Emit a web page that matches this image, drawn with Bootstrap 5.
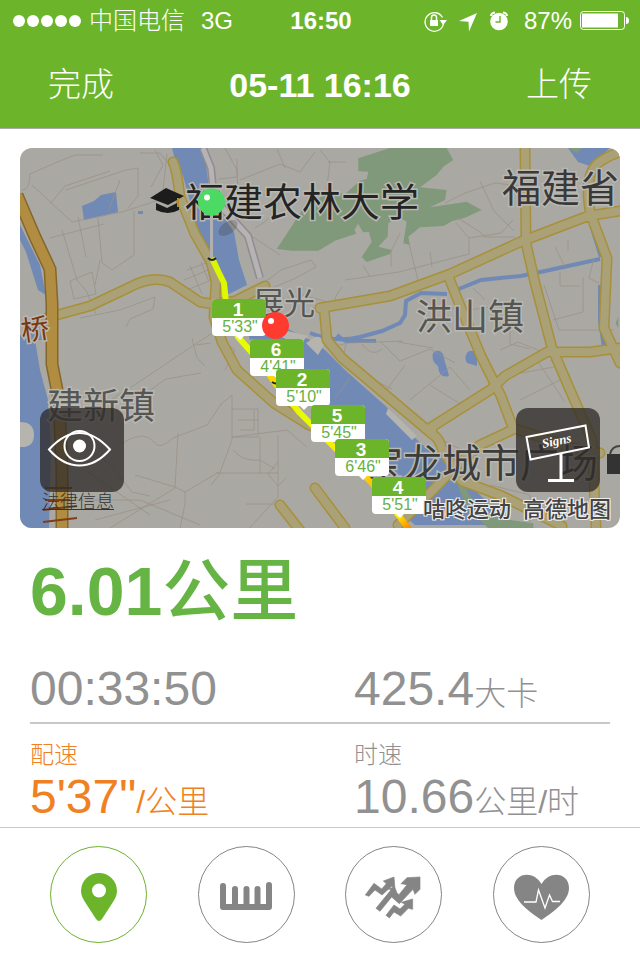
<!DOCTYPE html>
<html lang="zh-CN">
<head>
<meta charset="utf-8">
<meta name="viewport" content="width=device-width, initial-scale=1">
<title>咕咚运动</title>
<link href="https://cdn.jsdelivr.net/npm/bootstrap@5.3.0/dist/css/bootstrap.min.css" rel="stylesheet">
<style>
body{font-family:"Liberation Sans","Noto Sans CJK SC",sans-serif;color:#919191;background:#fff}
.app{min-height:100vh}
.top-area{background:#6cb52a;color:#fff;border-bottom:1px solid #a9aaa5}
.status{height:41px;padding:0 11px 0 13px;font-size:24px;font-weight:300;line-height:40px}
.side{flex:1 1 0}
.dots{gap:2px}
.dot{width:12px;height:12px;border-radius:50%;background:#fff}
.titlebar{height:87px;padding:0 48px}
.titlebar h1{font-size:34px;line-height:40px}
.titlebar .btn{font-size:33px;line-height:40px;font-weight:300;color:#fff}
.map-wrap{margin:19px 20px 0;border-radius:12px;aspect-ratio:600/380}
.map-btn{width:84px;height:84px;bottom:36px;border-radius:12px;background:rgba(46,42,40,.76)}
.map-btn svg{width:84px;height:84px}
.at-left{left:20px}.at-right{right:20px}
.legal{left:22px;bottom:16px;font-size:18px;line-height:20px;font-weight:300;color:#333}
.legal:hover{color:#000}
.credit{right:9px;bottom:4px;font-size:22px;line-height:28px;color:#444;font-weight:500;text-shadow:1px 1px #eee,-1px -1px #eee,1px -1px #eee,-1px 1px #eee}
.stats{padding:23px 30px 0}
.distance{font-size:68px;line-height:80px;color:#66b544;font-weight:700}
.distance span{font-weight:500}
.num{font-size:48px;line-height:56px}
.num span{font-size:32px;font-weight:300}
.time-row{padding:30px 0 0;border-bottom:2px solid #c7c7cc}
.second{padding-left:34px}
.cap{font-size:24px;line-height:34px;font-weight:300;margin-top:14px}
.speed .num{line-height:49px}
.pace{color:#f08122}
.tabs{border-top:1px solid #c8c8c8;padding:18px 50px}
.ring{width:97px;height:97px;border:1px solid #858585;border-radius:50%;color:#858585}
.ring.on{border-color:#6cb52a;color:#6cb52a}
.ring svg{width:95px;height:95px}
svg text{font-family:"Liberation Sans","Noto Sans CJK SC",sans-serif}
.place{fill:#4a4a48;stroke:#b9b8b3;stroke-width:3;paint-order:stroke}
.tag-no{font-weight:700;font-size:19px;fill:#fff;text-anchor:middle}
.tag-time{font-size:16px;fill:#67b043;text-anchor:middle}
</style>
<script src="https://cdn.jsdelivr.net/npm/bootstrap@5.3.0/dist/js/bootstrap.bundle.min.js"></script>
</head>
<body>
<div class="app d-flex flex-column">
<header class="top-area">
  <div class="status d-flex align-items-center">
    <div class="side d-flex align-items-center">
      <div class="dots d-flex me-2"><i class="dot"></i><i class="dot"></i><i class="dot"></i><i class="dot"></i><i class="dot"></i></div>
      <span>中国电信</span><span class="ms-3">3G</span>
    </div>
    <strong class="fw-bold">16:50</strong>
    <div class="side d-flex align-items-center justify-content-end gap-2">
      <svg width="84" height="24" viewBox="425 8 84 24" aria-hidden="true">
        <g transform="translate(-10 0)"><path d="M454.500 22.500a9.300 9.300 0 1 1-1-6" fill="none" stroke="#fff" stroke-width="1.300"/><path d="M450.500 19h7.500l-3.800 5z" fill="#fff"/><path d="M441 19h8v6h-8z" fill="#fff"/><path d="M442.500 19v-2.500a2.500 2.500 0 0 1 5 0V19" fill="none" stroke="#fff" stroke-width="1.500"/></g>
        <path d="M478 12 460 20l9.500.8.500 9.700z" fill="#fff"/>
        <circle cx="500" cy="20.500" r="8.800" fill="#fff"/><path d="M501 15v6h-4.500" fill="none" stroke="#6cb52a" stroke-width="1.400"/><path d="M492 15q0-3 4-3.500M508 15q0-3-4-3.500" fill="none" stroke="#fff" stroke-width="2"/>
      </svg>
      <span class="ms-2">87%</span>
      <svg width="49" height="20" viewBox="0 0 49 20" aria-label="电量"><rect x=".500" y=".500" width="44" height="18" rx="3" fill="none" stroke="#fff"/><path d="M2 2.500h36v14H2zM46 6q3 0 3 3.500T46 13z" fill="#fff"/></svg>
    </div>
  </div>
  <div class="titlebar d-flex align-items-center justify-content-between">
    <button class="btn border-0 p-0">完成</button>
    <h1 class="m-0 fw-bold">05-11 16:16</h1>
    <button class="btn border-0 p-0">上传</button>
  </div>
</header>

<main class="flex-grow-1">
<section class="map-wrap position-relative overflow-hidden" aria-label="路线地图">
<svg class="d-block w-100 h-100" viewBox="20 148 600 380" preserveAspectRatio="xMidYMid slice">
<defs>
  <linearGradient id="run" gradientUnits="userSpaceOnUse" x1="211" y1="258" x2="408" y2="528"><stop offset="0" stop-color="#d8f500"/><stop offset=".3" stop-color="#eaff00"/><stop offset=".4" stop-color="#ffd500"/><stop offset=".55" stop-color="#e6ff00"/><stop offset=".75" stop-color="#ffe600"/><stop offset=".88" stop-color="#ffae00"/><stop offset=".95" stop-color="#ffef00"/><stop offset="1" stop-color="#ff8c00"/></linearGradient>
</defs>
<path fill="#a9a8a3" d="M20 148h600v380H20z"/>
<g fill="#718ab5">
  <path d="M172 148h32l3 25 4 27 14 19 9 13 5 28 8 25-20 10-9-20-10-25-10-20-6-22-9-32-9-20z"/>
  <path d="M240 308l20 2 20 15 30 15 15 10 20 20 45 40 30 33 25 17 22 22 28 28 18 15h-98l-40-35-30-35-35-50-30-45-30-20z"/>
  <path d="M20 335l15 5 5 30 8 30 3 50-2 78H20z"/><path d="M20 225l20 40 6 30-8-5-12-38-6-12zM25 325l12-8 5 23H22z"/>
  <path d="M82 206l12-5 7-6 15-3 2 20-34 8zM568 148h42l-20 18-12-4zM433 353q6-5 10 1l2 8 3 10 1 4q-10 3-11-10-7-5-5-13zM469 351h8v15l-10-3q-4-7 2-12zM138 211h5v3h-5z"/>
</g>
<g fill="none" stroke="#718ab5" stroke-width="4"><path d="M310 333q25 10 50 4l22-6 18-8 5-8 1-14 15-8 26 1M454 291l27-11 40-4 24-5 55-12M591 225l10 32M600 285v35l4 28M337 335q6 6 11 6h28M605 336v18"/></g>
<g transform="translate(320 140) scale(.3333)" fill="#81997b">
  <path d="M115 55l95-31h170l20 36-30 20-20 25-50 37 80 8-5 30-45 22 110-17 45 25-50 23-38 10-27 15-70 4-35 28 5 25-20-5 10-65-25-15-30 20-2 40-28 30 40 10-5 12-70 24-15-15 30-45-8-30-18 1-15-26-10 18 4 12-63 21-50 30-80 0-45-5 30-45 45-70 50-35 35-25 45 10 45-40 20-5 5-22-30-2z"/>
  <path d="M745 24h40l-15 15zM895 530v35l-8-15z"/><path d="M400 1005l30 25 18 35 52 55 70 20 70 10v30H520l-80-80z"/>
</g>
<path fill="#b5b4af" d="M388 408l-2 6 26 26 5-4zM284 330l24 6-8 8-22-8zM20 422q14 0 14 13t-14 12zM308 342q13-12 16 3l-6 10-12-12z"/>
<!-- lanes -->
<g fill="none" stroke="#9b9085" stroke-opacity=".75" stroke-width="1">
  <path d="M22 190q8 0 8-16l25-11 20-8h28M32 185l40 37 50-10 40-13 5-45M66 190l60-20 12-2v28l-10 12M50 204l15-18 45-15M62 230l15 50 10 12 9 22M50 238l54-14M78 217l8 40M98 218l4 45 10 7 22-15v-44M100 260l-5 25M70 281l22-9 4 22-22 5zM140 153h20l8 10M155 150l8 15-12 22M120 180l-12 32M80 318l40-8 35-13-2 12-23 10-4 8M187 270l22-8M184 280l24-10M187 290l22-9M190 266l12 28M201 262l8 20"/>
  <path d="M98 408l44-28 40-27 38-25M142 396l24-17 35-6M124 442q20-12 30 0 5 9 19-4l34-13 15-22M192 338l5 20 8 8M196 345l15-2M213 333l22 17-10 20M220 405l12-10v45l-13 35-8 10M232 409h26v28h-26M238 420h20M240 430h14v-20M232 437l55-7 20 17M233 450q10 12 27 10l15 9M216 473h62M278 435v62l-46 50M278 462l-10 12 10 12 8-8M246 504h34M260 437v36M135 475l40 12 10 5 34-20M90 450l20 14 22 28 18 4M60 500h80l60 25M85 470l65 45M95 520l75-20M110 528l65-40 3-55M185 492v12l-5 24"/>
  <path d="M225 148l12 22 1 25M237 159v18l-18 2M240 180l40-16 20 8 15-20M245 187l20 8M255 228q20-10 25-30M250 235l30 20M320 150l10 12-4 32M328 162h18M256 289l25-19 30-10 5 7-22 12-35 14M278 300l25-5 35 10M285 168l-8-19M312 190l-7 25M342 287q-10 12-6 18M345 280l54-8 70-18v-16l-13-15M363 265l7 12M391 267v-16l9-18M408 240l10 40M430 252l2 15M458 218l22 14 5 5h30M480 181l14 30 20 20M445 203l20-10 30-10 25 3M469 238l32-5 12-13"/>
  <path d="M328 348l20-5 55-2M346 344l-4 20 50 25M362 344q10 14 20 5M380 341l20 20 30-12 25 14M405 365l-22 30M410 400l40-33 20 23M430 385l40 25M398 342l35 6M440 303l20 8 40-5 10 10v28l20 5M544 285l15 45h55M555 247l10 20M568 240v11M594 258l-5 20 10 5M560 272v14h20M500 350l18-8 30 12M553 320l30-8v-35M432 435l40 20 45-5M445 460l30 25M520 400l50-25-20-15M538 362l27 40M510 375l55-10M350 378l-15 20M485 300l-12-12M490 485l40 10v33M468 460l15-20"/>
</g>
<!-- main roads: casing, then fill -->
<defs>
  <g id="roads"><path d="M173 162q4 8 7 35l15 37 16 28 5 20-2 35 8 25 15 28 37 33 35 22 20 8"/><path d="M46 318l44-12 40-19q22-12 40-5l30 20 13 2 22-3 30-15"/><path d="M525 148l1 95 9 40 17 65 18 42 22 50 4 88M320 308l70-12 60-22 70-32 68-26 32-5M320 308h4l3 32 15 18 45 38 45 38q8 5 10 15l20 32 40 15 60 30M449 278l12 30 20 48 20 40 12 32 60 20 27 5M432 430l-2-2 60-38 15-14 42-24h43l30-4M591 216q-8-38 6-52 10-8 23-12M592 218l15 40-3 70 16 35M512 430l-32 15-25 22-22 23-35 35M280 505l22 28M315 488l30 40"/></g>
</defs>
<use href="#roads" fill="none" stroke="#a8903a" stroke-width="11" stroke-linejoin="round" stroke-linecap="round"/>
<use href="#roads" fill="none" stroke="#aaa276" stroke-width="8" stroke-linejoin="round" stroke-linecap="round"/>
<path d="M17 195l18 42 15 32 2 35v60l7 36 3 70v65" fill="none" stroke="#85672d" stroke-width="13"/>
<path d="M17 195l18 42 15 32 2 35v60l7 36 3 70v65" fill="none" stroke="#b08d40" stroke-width="10"/>
<path d="M203 148l8 20 3 30 14 16 20 22 12 42" fill="none" stroke="#918b91" stroke-width="8"/><path d="M203 148l8 20 3 30 14 16 20 22 12 42" fill="none" stroke="#b5b3b4" stroke-width="5"/>
<path d="M45 488h27M43 510l34-4M43 522l34-4M45 500h25" stroke="#803d16" stroke-width="2"/>
<!-- place names -->
<g font-weight="400">
  <text class="place" x="185" y="216" font-size="39" style="fill:#242424">福建农林大学</text>
  <text class="place" x="502" y="202" font-size="39" style="fill:#393939">福建省</text>
  <text class="place" x="416" y="330" font-size="36" style="fill:#555552">洪山镇</text>
  <text class="place" x="253" y="314" font-size="31" style="fill:#555552">展光</text>
  <text class="place" x="47" y="419" font-size="36" style="fill:#555552">建新镇</text>
  <text class="place" x="364" y="477" font-size="39" style="fill:#3c3c3a">宝龙城市广场</text>
  <text class="place" x="21" y="340" font-size="28" transform="rotate(-8 30 330)" style="fill:#7a3710">桥</text>
</g>
<path d="M150 198l16-10 18 8-16 9zM156 203l11 5 12-6v8q-11 6-23 0z" fill="#1c1c1c"/><path d="M178 198v9" stroke="#b18e28" stroke-width="2"/><path d="M607 454h13v20h-13z" fill="#333"/><path d="M610 454q2-8 10-8" fill="none" stroke="#444" stroke-width="2"/>
<!-- run -->
<ellipse cx="228" cy="228" rx="11" ry="6" fill="#333" opacity=".25" transform="rotate(-35 228 228)"/>
<path d="M212 258l7 15 5 10 2 20 12 34 25 28 12 18 25 30 35 35 30 28 22 24 24 32" fill="none" stroke="url(#run)" stroke-width="6" stroke-linejoin="round"/>
<path d="M208 258q4 4 8 0M272 382q4 3 7 0" fill="none" stroke="#222" stroke-width="2"/>
<path d="M211.500 212v46" stroke="#b0b0b3" stroke-width="3"/><circle cx="211.500" cy="202" r="13.500" fill="#4cd964"/><circle cx="207" cy="197.500" r="3" fill="#fff"/>
<defs><g id="tag"><path d="M4 0h46q4 0 4 4v29q0 4-4 4H32l-4 4-4-4H4q-4 0-4-4V4q0-4 4-4z" fill="#fff"/><path d="M4 0h46q4 0 4 4v15H0V4q0-4 4-4z" fill="#6cb52a"/></g></defs>
<g transform="translate(212 299)"><use href="#tag"/><text class="tag-no" x="26" y="17">1</text><text class="tag-time" x="28" y="33">5'33"</text></g>
<circle cx="275.500" cy="325.500" r="13.500" fill="#ff3b30"/><circle cx="271" cy="321" r="3" fill="#fff"/>
<g transform="translate(250 339)"><use href="#tag"/><text class="tag-no" x="26" y="17">6</text><text class="tag-time" x="28" y="33">4'41"</text></g>
<g transform="translate(276 369)"><use href="#tag"/><text class="tag-no" x="26" y="17">2</text><text class="tag-time" x="28" y="33">5'10"</text></g>
<g transform="translate(311 405)"><use href="#tag"/><text class="tag-no" x="26" y="17">5</text><text class="tag-time" x="28" y="33">5'45"</text></g>
<g transform="translate(335 439)"><use href="#tag"/><text class="tag-no" x="26" y="17">3</text><text class="tag-time" x="28" y="33">6'46"</text></g>
<g transform="translate(372 477)"><use href="#tag"/><text class="tag-no" x="26" y="17">4</text><text class="tag-time" x="28" y="33">5'51"</text></g>
</svg>
<button class="map-btn at-left position-absolute border-0 p-0" aria-label="显示路线">
<svg viewBox="0 0 84 84" fill="none" stroke="#fff" stroke-width="2"><path d="M9 41.500Q24 25 39.500 25T70 41.500Q56 57.500 39.500 57.500T9 41.500z"/><circle cx="39.500" cy="38" r="15"/><circle cx="39.500" cy="38" r="6.500" fill="#fff" stroke="none"/></svg></button>
<button class="map-btn at-right position-absolute border-0 p-0" aria-label="里程牌">
<svg viewBox="0 0 84 84" fill="none" stroke="#fff"><path d="M10.500 29 69.500 17.500 73 39.500 14.500 51.500z" stroke-width="2"/><path d="M45 46v26M32 72.500h26" stroke-width="3"/><text x="27" y="40" transform="rotate(-12 27 40)" font-size="13" font-style="italic" font-weight="700" fill="#fff" stroke="none" style="font-family:'Liberation Serif',serif">Signs</text></svg></button>
<a href="#" class="legal position-absolute">法律信息</a>
<div class="credit position-absolute d-flex"><span class="me-2 pe-1">咕咚运动</span><span>高德地图</span></div>
</section>

<section class="stats">
  <div class="distance">6.01<span>公里</span></div>
  <div class="time-row row g-0"><div class="num col-6">00:33:50</div><div class="num col-6 second">425.4<span>大卡</span></div></div>
  <div class="speed row g-0">
    <div class="col-6 pace"><div class="cap">配速</div><div class="num">5'37"<span>/公里</span></div></div>
    <div class="col-6 second"><div class="cap">时速</div><div class="num">10.66<span>公里/时</span></div></div>
  </div>
</section>
</main>

<nav class="tabs d-flex justify-content-between">
  <button class="ring on bg-transparent p-0" aria-label="地图"><svg viewBox="0 0 95 95"><path fill="currentColor" fill-rule="evenodd" d="M48 26a18 18 0 0 1 18 18c0 4-2 8-4 11L51 72q-3 4-6 0L34 55c-2-3-4-7-4-11a18 18 0 0 1 18-18zm0 10.500a7 7 0 1 0 0 14 7 7 0 0 0 0-14z"/></svg></button>
  <button class="ring bg-transparent p-0" aria-label="里程"><svg viewBox="0 0 95 95"><path d="M24 39v21h46V38M36 58V42M47.500 58V42M58.500 58V42" fill="none" stroke="currentColor" stroke-width="6" stroke-linecap="round" stroke-linejoin="round"/></svg></button>
  <button class="ring bg-transparent p-0" aria-label="图表"><svg viewBox="0 0 95 95"><g transform="translate(14 14) scale(.3333)" fill="currentColor" stroke="currentColor" stroke-width="2" stroke-linejoin="round"><path d="M16 102 42 67l23 17 14-16-9-8 32-12 3 36-10-8-29 26-21-15-18 19z"/><path d="M48 142 97 82l20 19 24-30-18-3 18-18 39-2v37l-15 15-6-15-41 43-23-20-35 43z"/><path d="M78 163 102 132l18 12 15-14-11-6 34-10v31l-13-3-23 23-20-12-14 18z"/><path d="M85 84l18-6 7 14-12-4z"/></g></svg></button>
  <button class="ring bg-transparent p-0" aria-label="心率"><svg viewBox="0 0 95 95"><path fill="currentColor" d="M47.500 73C39 67 20 55 20 41c0-16 20-18 27.500-4C55 23 75 25 75 41c0 14-19 26-27.500 32z"/><path d="M30 55h12l2.500-12L51 61l4.500-13 3 6.500H66" fill="none" stroke="#fff" stroke-width="1.300"/></svg></button>
</nav>
</div>
</body>
</html>
